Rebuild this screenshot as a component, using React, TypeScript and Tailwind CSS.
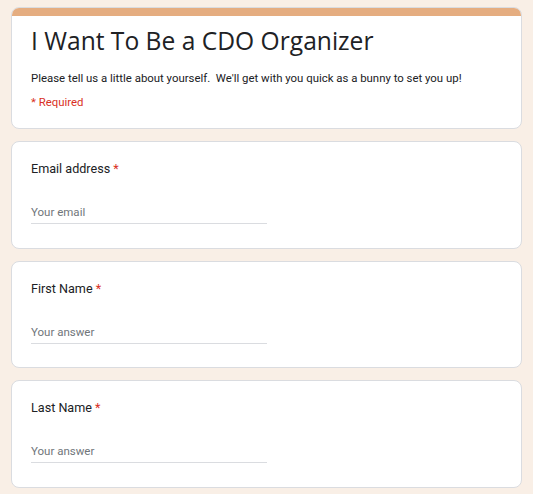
export default function App() {
  const questions = [
    { label: "Email address", placeholder: "Your email" },
    { label: "First Name", placeholder: "Your answer" },
    { label: "Last Name", placeholder: "Your answer" },
  ];

  return (
    <div className="min-h-[494px] w-[533px] bg-[#f9efe6] px-[11px] pt-[7px] pb-[6px] font-['Roboto',sans-serif]">
      <div className="flex flex-col gap-[12px]">
        {/* Header card */}
        <div className="overflow-hidden rounded-[8px] border border-[#dadce0] bg-white">
          <div className="h-[8px] bg-[#e5ad80]" />
          <div className="px-[19px] pt-[9px] pb-[17px]">
            <h1 className="font-['Open_Sans',sans-serif] text-[24.6px] leading-[32px] text-[#202124]">
              I Want To Be a CDO Organizer
            </h1>
            <p className="mt-[12px] whitespace-pre text-[11.4px] leading-[18px] text-[#202124]">
              Please tell us a little about yourself.  We'll get with you quick as a bunny to set you up!
            </p>
            <p className="mt-[6px] text-[11.4px] leading-[18px] text-[#d93025]">* Required</p>
          </div>
        </div>

        {questions.map((q) => (
          <div
            key={q.label}
            className="rounded-[8px] border border-[#dadce0] bg-white px-[19px] pt-[18px] pb-[23.5px]"
          >
            <div className="text-[12.6px] leading-[18px] text-[#202124]">
              {q.label} <span className="text-[#d93025]">*</span>
            </div>
            <div className="mt-[26px] w-[236px] border-b border-[#dadce0] pb-[3px] text-[11.5px] leading-[16px] text-[#70757a]">
              {q.placeholder}
            </div>
          </div>
        ))}
      </div>
    </div>
  );
}
